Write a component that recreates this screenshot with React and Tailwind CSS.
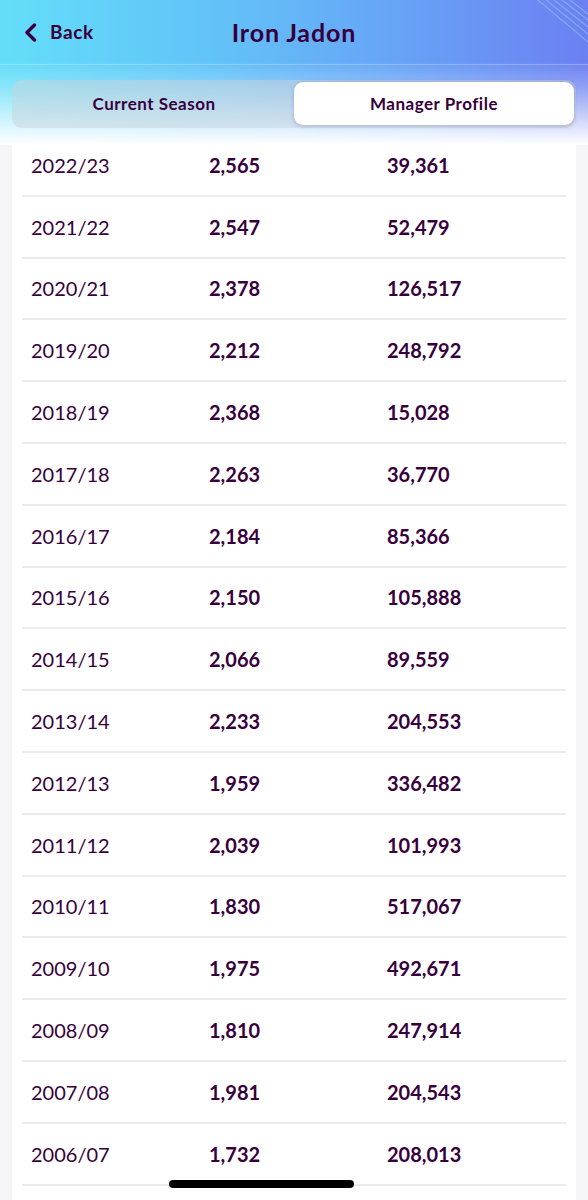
import React from "react";

const rows = [
  ["2022/23", "2,565", "39,361"],
  ["2021/22", "2,547", "52,479"],
  ["2020/21", "2,378", "126,517"],
  ["2019/20", "2,212", "248,792"],
  ["2018/19", "2,368", "15,028"],
  ["2017/18", "2,263", "36,770"],
  ["2016/17", "2,184", "85,366"],
  ["2015/16", "2,150", "105,888"],
  ["2014/15", "2,066", "89,559"],
  ["2013/14", "2,233", "204,553"],
  ["2012/13", "1,959", "336,482"],
  ["2011/12", "2,039", "101,993"],
  ["2010/11", "1,830", "517,067"],
  ["2009/10", "1,975", "492,671"],
  ["2008/09", "1,810", "247,914"],
  ["2007/08", "1,981", "204,543"],
  ["2006/07", "1,732", "208,013"],
];

export default function App() {
  return (
    <div className="relative w-[588px] h-[1200px] overflow-hidden bg-[#f5f5f7] text-[#37003c] font-['Lato',sans-serif]">
      <header className="relative z-10 h-[145px] bg-[linear-gradient(to_bottom,rgba(255,255,255,0)_0%,rgba(255,255,255,0)_42%,rgba(255,255,255,0.25)_60%,rgba(255,255,255,1)_100%),linear-gradient(to_right,#63def9_0%,#62c4f8_35%,#67a6f6_65%,#6b80f2_100%)]">
        <svg className="absolute right-0 top-0" width="90" height="70" viewBox="0 0 90 70">
          <g stroke="#9be8f4" strokeWidth="1.2" opacity="0.4">
            <line x1="40" y1="0" x2="90" y2="42" />
            <line x1="48" y1="0" x2="90" y2="34" />
            <line x1="56" y1="0" x2="90" y2="27" />
            <line x1="64" y1="0" x2="90" y2="20" />
            <line x1="72" y1="0" x2="90" y2="14" />
          </g>
        </svg>
        <div className="relative grid grid-cols-[1fr_auto_1fr] items-center h-[65px] border-b border-[rgba(255,255,255,0.25)]">
          <div className="flex items-center gap-[13px] pl-[24px]">
            <svg width="13" height="19" viewBox="0 0 13 19" fill="none">
              <path d="M10.5 2 L3 9.5 L10.5 17" stroke="#37003c" strokeWidth="3.4" strokeLinecap="round" strokeLinejoin="round" />
            </svg>
            <span className="text-[19px] font-bold tracking-[0.6px]">Back</span>
          </div>
          <h1 className="text-[25px] font-bold tracking-[0.9px] leading-none">Iron Jadon</h1>
          <div />
        </div>
        <div className="px-[12px] pt-[15px]">
          <div className="flex h-[48px] rounded-[10px] bg-[rgba(200,212,220,0.5)] p-[2px] pb-[3px]">
            <div className="flex-1 flex items-center justify-center text-[17px] font-bold tracking-[0.5px]">
              Current Season
            </div>
            <div className="flex-1 flex items-center justify-center rounded-[9px] bg-white shadow-[0_1px_4px_rgba(40,40,90,0.25)] text-[17px] font-bold tracking-[0.5px]">
              Manager Profile
            </div>
          </div>
        </div>
      </header>
      <main className="-mt-[10px] mx-[12px] bg-white px-[10px] pb-[40px]">
        {rows.map(([season, pts, rank]) => (
          <div
            key={season}
            className="flex items-center h-[61.8px] border-b-2 border-[#ececf0] pl-[9px] text-[20px]"
          >
            <div className="w-[178px] font-normal">{season}</div>
            <div className="w-[178px] font-bold">{pts}</div>
            <div className="font-bold">{rank}</div>
          </div>
        ))}
      </main>
      <div className="absolute left-[169px] top-[1180px] w-[185px] h-[8px] rounded-full bg-black" />
    </div>
  );
}
